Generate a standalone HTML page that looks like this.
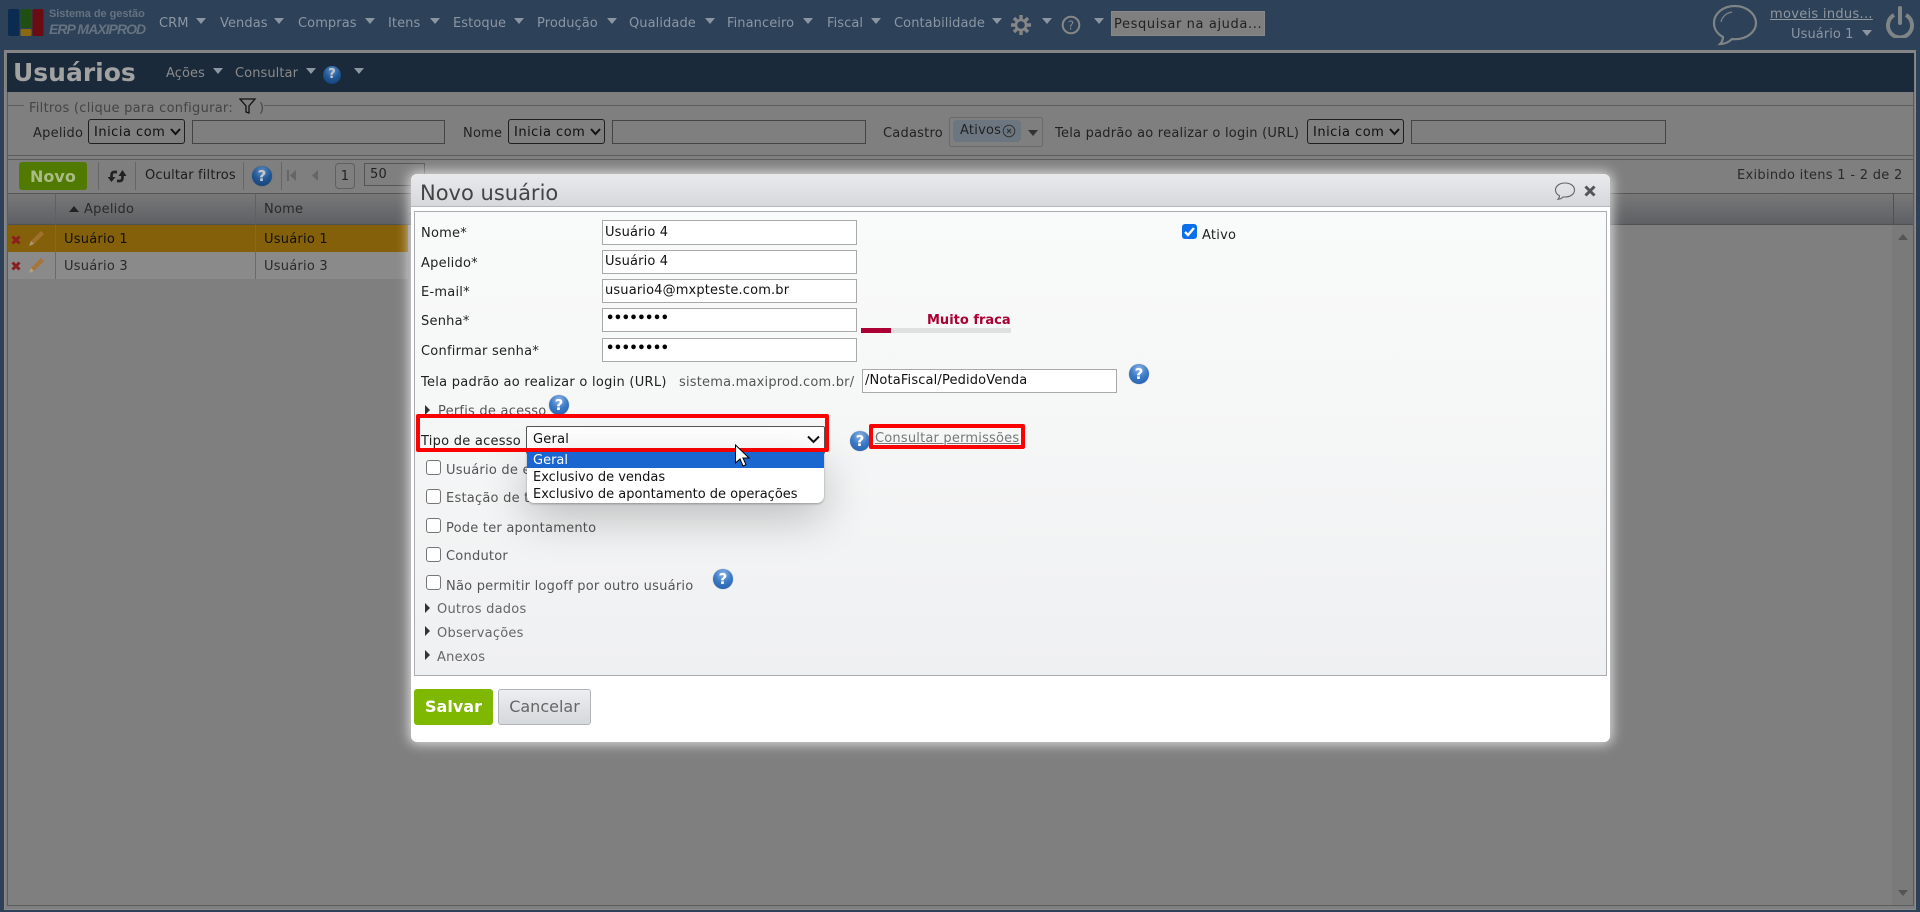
<!DOCTYPE html>
<html lang="pt-BR"><head><meta charset="utf-8"><title>Novo usuário</title>
<style>
*{box-sizing:border-box}
html,body{margin:0;padding:0;width:1920px;height:912px;overflow:hidden;background:#2d4159;font-family:"DejaVu Sans","Liberation Sans",sans-serif;font-size:13px;letter-spacing:.23px}
.t{position:absolute;white-space:nowrap;line-height:16px;height:16px}
.b{position:absolute}
.a{position:absolute;width:0;height:0;border-left:5px solid transparent;border-right:5px solid transparent;border-top:6px solid #8b96a3}
.m{color:#8b96a3;letter-spacing:.08px}
.h{position:absolute;width:20px;height:20px;border-radius:50%;background:radial-gradient(circle at 50% 25%,#8fb6e6 0,#3f7cc8 45%,#1f5aa8 100%);color:#fff;font:bold 15px/20px "DejaVu Sans",sans-serif;text-align:center;letter-spacing:0;box-shadow:0 0 1px rgba(0,0,0,.4)}
.h.d{background:radial-gradient(circle at 50% 25%,#5f8cc0 0,#1f5696 50%,#123c70 100%);color:#c8c8c8}
.sel{position:absolute;border:1px solid #1f1f1f;border-radius:3px;background:#7f7f7f;color:#111;height:25px;line-height:25px;padding-left:5px;white-space:nowrap;letter-spacing:.5px}
.inp{position:absolute;border:1px solid #444;background:#7f7f7f;height:24px}
.chev{position:absolute}
.fi{position:absolute;left:602px;width:255px;background:#fff;border:1.5px solid #a9a9a9;color:#111;line-height:23px;padding-left:2px;white-space:nowrap;letter-spacing:.15px}
.lb{color:#222}
.g{color:#555}
.cb{position:absolute;left:426px;width:15px;height:15px;border:1.5px solid #767676;border-radius:3px;background:#fff}
.tri{position:absolute;left:425px;width:0;height:0;border-top:5px solid transparent;border-bottom:5px solid transparent;border-left:5px solid #333}
.sep{position:absolute;top:162px;width:1px;height:28px;background:#666}
</style></head>
<body>
<!-- page background -->
<div class="b" style="left:4px;top:50px;width:1912px;height:860px;background:#7f7f7f;border:1px solid #8a8a8a"></div>
<div class="b" style="left:4px;top:50px;width:1912px;height:3px;background:#858585"></div>
<div class="b" style="left:7px;top:53px;width:1907px;height:39px;background:#1a2a3a"></div>
<div class="b" style="left:7px;top:905px;width:1907px;height:1px;background:#5c5c5c"></div>
<div class="b" style="left:1913px;top:92px;width:1px;height:814px;background:#5c5c5c"></div>
<div class="b" style="left:7px;top:92px;width:1px;height:814px;background:#5c5c5c"></div>

<!-- logo -->
<svg class="b" style="left:8px;top:9px" width="36" height="28"><rect width="11.5" height="27" rx="2" fill="#0b2c50"/><rect x="12.5" width="11" height="19" rx="2" fill="#1f4f12"/><rect x="12.5" y="20" width="11" height="7" rx="1.5" fill="#8a6812"/><rect x="24.5" width="11" height="27" rx="2" fill="#6a0c12"/></svg>
<div class="t" style="left:49px;top:6px;font:bold 11px/16px 'Liberation Sans',sans-serif;color:#66727f;letter-spacing:-.05px">Sistema de gestão</div>
<div class="t" style="left:49px;top:21px;font:italic bold 14px/16px 'Liberation Sans',sans-serif;color:#66727f;letter-spacing:-.95px">ERP MAXIPROD</div>

<!-- top menu -->
<div class="t m" style="left:159px;top:16px">CRM</div><i class="a" style="left:196px;top:18px"></i>
<div class="t m" style="left:220px;top:16px">Vendas</div><i class="a" style="left:274px;top:18px"></i>
<div class="t m" style="left:298px;top:16px">Compras</div><i class="a" style="left:365px;top:18px"></i>
<div class="t m" style="left:388px;top:16px">Itens</div><i class="a" style="left:430px;top:18px"></i>
<div class="t m" style="left:453px;top:16px">Estoque</div><i class="a" style="left:514px;top:18px"></i>
<div class="t m" style="left:537px;top:16px">Produção</div><i class="a" style="left:607px;top:18px"></i>
<div class="t m" style="left:629px;top:16px">Qualidade</div><i class="a" style="left:705px;top:18px"></i>
<div class="t m" style="left:727px;top:16px">Financeiro</div><i class="a" style="left:803px;top:18px"></i>
<div class="t m" style="left:827px;top:16px">Fiscal</div><i class="a" style="left:871px;top:18px"></i>
<div class="t m" style="left:894px;top:16px">Contabilidade</div><i class="a" style="left:992px;top:18px"></i>
<svg class="b" style="left:1011px;top:15px" width="20" height="20" viewBox="0 0 20 20"><g stroke="#868686" stroke-width="3.4"><path d="M10 0v20M0 10h20M3 3l14 14M17 3L3 17"/></g><circle cx="10" cy="10" r="6.300" fill="#868686"/><circle cx="10" cy="10" r="3.800" fill="#2d4159"/></svg>
<i class="a" style="left:1042px;top:18px"></i>
<svg class="b" style="left:1061px;top:15px" width="20" height="20"><circle cx="10" cy="10" r="8.300" fill="none" stroke="#868686" stroke-width="2"/><text x="10" y="14.500" text-anchor="middle" font-family="DejaVu Sans" font-size="12" fill="#868686">?</text></svg>
<i class="a" style="left:1094px;top:18px"></i>
<div class="b" style="left:1111px;top:11px;width:154px;height:25px;background:#7f7f7f;border:1px solid #888"></div>
<div class="t" style="left:1114px;top:17px;color:#222;letter-spacing:.62px">Pesquisar na ajuda...</div>

<!-- top right -->
<svg class="b" style="left:1712px;top:4px" width="46" height="42" viewBox="0 0 46 42" fill="none" stroke="#7f8487" stroke-width="2.200"><path d="M23 2C11 2 2 9.500 2 19c0 6 3.500 11 9 14 0 2.500-1 5-3 7 4.500 0 9-2 12-5 1 .1 2 .2 3 .2 12 0 21-7.500 21-16.200S35 2 23 2z"/><path d="M9 18c1-5 5-9 11-10" stroke-width="1.200"/></svg>
<div class="t" style="left:1770px;top:7px;color:#8f979f;text-decoration:underline;letter-spacing:.3px">moveis indus...</div>
<div class="t m" style="left:1791px;top:27px">Usuário 1</div><i class="a" style="left:1862px;top:30px"></i>
<svg class="b" style="left:1886px;top:6px" width="28" height="32" fill="none" stroke="#7f8487" stroke-width="4"><path d="M8 9A12 12 0 1 0 20 9"/><path d="M14 2v15" stroke-linecap="round"/></svg>

<!-- title -->
<div class="t" style="left:13px;top:58px;height:30px;font:bold 25px/30px 'DejaVu Sans',sans-serif;color:#a2a2a2;letter-spacing:0">Usuários</div>
<div class="t" style="left:166px;top:66px;color:#8a8a8a;letter-spacing:.08px">Ações</div><i class="a" style="left:213px;top:68px"></i>
<div class="t" style="left:235px;top:66px;color:#8a8a8a;letter-spacing:.08px">Consultar</div><i class="a" style="left:306px;top:68px"></i>
<div class="h d" style="left:323px;top:66px;width:18px;height:18px;line-height:18px;font-size:13px">?</div><i class="a" style="left:354px;top:68px"></i>

<!-- filters -->
<div class="b" style="left:7px;top:105px;width:1907px;height:51px;border:1px solid #5c5c5c"></div>
<div class="t" style="left:24px;top:100px;width:240px;height:14px;background:#7f7f7f"></div>
<div class="t" style="left:29px;top:101px;color:#444;letter-spacing:.27px">Filtros (clique para configurar:</div>
<svg class="b" style="left:239px;top:98px" width="18" height="16" fill="none" stroke="#111" stroke-width="1.300"><path d="M1 1h15L10 8v7l-3-1V8z"/></svg>
<div class="t" style="left:259px;top:101px;color:#444">)</div>

<div class="t lb" style="left:33px;top:126px">Apelido</div>
<div class="sel" style="left:88px;top:119px;width:97px">Inicia com</div>
<svg class="chev" style="left:170px;top:128px" width="11" height="8" fill="none" stroke="#111" stroke-width="2"><path d="M1 1l4.500 5L10 1"/></svg>
<div class="inp" style="left:192px;top:120px;width:253px"></div>
<div class="t lb" style="left:463px;top:126px">Nome</div>
<div class="sel" style="left:508px;top:119px;width:97px">Inicia com</div>
<svg class="chev" style="left:590px;top:128px" width="11" height="8" fill="none" stroke="#111" stroke-width="2"><path d="M1 1l4.500 5L10 1"/></svg>
<div class="inp" style="left:612px;top:120px;width:254px"></div>
<div class="t lb" style="left:883px;top:126px">Cadastro</div>
<div class="b" style="left:949px;top:117px;width:94px;height:30px;border:1px solid #6a6a6a;border-radius:3px"></div>
<div class="b" style="left:953px;top:120px;width:68px;height:22px;background:#6c7680;border-radius:4px"></div>
<div class="t" style="left:960px;top:123px;color:#222">Ativos</div>
<svg class="b" style="left:1002px;top:124px" width="14" height="14" fill="none" stroke="#333"><circle cx="7" cy="7" r="5.800"/><path d="M5 5l4 4M9 5l-4 4" stroke-width="1.200"/></svg>
<div class="b" style="left:1028px;top:130px;border-left:5px solid transparent;border-right:5px solid transparent;border-top:6px solid #333"></div>
<div class="t lb" style="left:1055px;top:126px">Tela padrão ao realizar o login (URL)</div>
<div class="sel" style="left:1307px;top:119px;width:97px">Inicia com</div>
<svg class="chev" style="left:1389px;top:128px" width="11" height="8" fill="none" stroke="#111" stroke-width="2"><path d="M1 1l4.500 5L10 1"/></svg>
<div class="inp" style="left:1411px;top:120px;width:255px"></div>

<!-- toolbar -->
<div class="b" style="left:7px;top:159px;width:1907px;height:34px;border:1px solid #5c5c5c;border-bottom:none"></div>
<div class="b" style="left:19px;top:162px;width:68px;height:28px;background:#517b00;border-radius:3px"></div>
<div class="t" style="left:30px;top:169px;font-weight:bold;font-size:16px;color:#a9bb86;width:50px;letter-spacing:0">Novo</div>
<div class="sep" style="left:98px"></div><div class="sep" style="left:135px"></div><div class="sep" style="left:243px"></div><div class="sep" style="left:281px"></div>
<svg class="b" style="left:108px;top:169px" width="19" height="15" fill="none" stroke="#222" stroke-width="2.700"><path d="M9 3H6C4 3 3.500 5 3.500 7v3"/><path d="M-.5 8l4 5 4-5z" fill="#222" stroke="none"/><path d="M9 12h3c2 0 2.500-2 2.500-4V5"/><path d="M10.500 7l4-6 4 6z" fill="#222" stroke="none"/></svg>
<div class="t" style="left:145px;top:168px;color:#1c1c1c;letter-spacing:.16px">Ocultar filtros</div>
<div class="h d" style="left:252px;top:166px">?</div>
<svg class="b" style="left:287px;top:169px" width="10" height="14" fill="#666"><rect x="0" y="1" width="2" height="11"/><path d="M3 6.500L9 1v11z"/></svg>
<svg class="b" style="left:311px;top:169px" width="8" height="14" fill="#666"><path d="M1 6.500L7 1v11z"/></svg>
<div class="b" style="left:335px;top:163px;width:20px;height:26px;border:1px solid #5f5f5f;border-radius:4px;text-align:center;line-height:26px;color:#222">1</div>
<div class="b" style="left:364px;top:163px;width:61px;height:23px;border:1px solid #555;line-height:22px;padding-left:5px;color:#222">50</div>
<div class="t" style="left:1737px;top:168px;color:#2a2a2a;letter-spacing:.3px">Exibindo itens 1 - 2 de 2</div>

<!-- grid -->
<div class="b" style="left:8px;top:193px;width:1905px;height:32px;background:linear-gradient(#787878,#5f6064);border-top:1px solid #555;border-bottom:1px solid #4e5054"></div>
<div class="b" style="left:55px;top:193px;width:1px;height:86px;background:#5f6064"></div>
<div class="b" style="left:255px;top:193px;width:1px;height:86px;background:#5f6064"></div>
<div class="b" style="left:1893px;top:193px;width:1px;height:32px;background:#4e5054"></div>
<div class="b" style="left:69px;top:206px;border-left:5px solid transparent;border-right:5px solid transparent;border-bottom:6px solid #222"></div>
<div class="t" style="left:84px;top:202px;color:#2a2a2a">Apelido</div>
<div class="t" style="left:264px;top:202px;color:#2a2a2a">Nome</div>
<div class="b" style="left:8px;top:225px;width:400px;height:27px;background:#85600a"></div>
<div class="b" style="left:8px;top:252px;width:400px;height:27px;background:#8a8a8a"></div>
<div class="b" style="left:55px;top:225px;width:1px;height:54px;background:#6a6a6a"></div>
<div class="b" style="left:255px;top:225px;width:1px;height:54px;background:#6a6a6a"></div>
<svg class="b" style="left:11px;top:235px" width="10" height="10" stroke="#8a1f1f" stroke-width="3"><path d="M1.500 1.500l7 7M8.500 1.500l-7 7"/></svg>
<svg class="b" style="left:27px;top:229px" width="19" height="19"><path d="M2 17l2-5L14 2l3 3L7 15z" fill="#a0702e"/><path d="M2 17l2-5 3 3z" fill="#a89a78"/></svg>
<svg class="b" style="left:11px;top:261px" width="10" height="10" stroke="#8a1f1f" stroke-width="3"><path d="M1.500 1.500l7 7M8.500 1.500l-7 7"/></svg>
<svg class="b" style="left:27px;top:256px" width="19" height="19"><path d="M2 17l2-5L14 2l3 3L7 15z" fill="#a8743a"/><path d="M2 17l2-5 3 3z" fill="#b0a488"/></svg>
<div class="t" style="left:64px;top:232px;color:#111">Usuário 1</div>
<div class="t" style="left:264px;top:232px;color:#111">Usuário 1</div>
<div class="t" style="left:64px;top:259px;color:#2a2a2a">Usuário 3</div>
<div class="t" style="left:264px;top:259px;color:#2a2a2a">Usuário 3</div>
<div class="b" style="left:1892px;top:225px;width:21px;height:680px;background:#7a7a7a"></div>
<div class="b" style="left:1898px;top:234px;border-left:5px solid transparent;border-right:5px solid transparent;border-bottom:6px solid #555"></div>
<div class="b" style="left:1898px;top:890px;border-left:5px solid transparent;border-right:5px solid transparent;border-top:6px solid #555"></div>

<!-- modal -->
<div class="b" style="left:411px;top:174px;width:1199px;height:568px;background:#fff;border-radius:6px;box-shadow:0 0 12px 2px rgba(255,255,255,.75)"></div>
<div class="b" style="left:411px;top:174px;width:1199px;height:33px;background:linear-gradient(#e9eaec,#d6d8dc);border-radius:6px 6px 0 0;border-bottom:1px solid #b4b8bc"></div>
<div class="t" style="left:420px;top:180px;height:26px;font-size:21px;line-height:26px;color:#444;letter-spacing:0">Novo usuário</div>
<svg class="b" style="left:1554px;top:181px" width="22" height="20" fill="none" stroke="#666" stroke-width="1.100"><path d="M11 2C5.500 2 1.500 5 1.500 9c0 2.500 1.500 4.500 4 5.800 0 1.200-.5 2.500-1.500 3.400 2 0 4-1 5.200-2.300.6.100 1.200.100 1.800.100 5.500 0 9.500-3 9.500-7S16.500 2 11 2z"/></svg>
<svg class="b" style="left:1584px;top:185px" width="12" height="12" stroke="#555" stroke-width="3"><path d="M1.500 1.500l9 9M10.500 1.500l-9 9"/></svg>

<div class="b" style="left:414px;top:211px;width:1193px;height:465px;background:linear-gradient(#f9fafa,#f6f7f7 40%,#eff0f2);border:1px solid #a9adb2"></div>

<div class="t lb" style="left:421px;top:226px">Nome*</div>
<div class="fi" style="top:220px;height:25px">Usuário 4</div>
<div class="t lb" style="left:421px;top:256px">Apelido*</div>
<div class="fi" style="top:250px;height:24px;line-height:22px">Usuário 4</div>
<div class="t lb" style="left:421px;top:285px">E-mail*</div>
<div class="fi" style="top:279px;height:24px;line-height:22px">usuario4@mxpteste.com.br</div>
<div class="t lb" style="left:421px;top:314px">Senha*</div>
<div class="fi" style="top:308px;height:24px;letter-spacing:-.5px;font-size:13px;line-height:20px;color:#000;font-weight:bold;padding-left:3px">••••••••</div>
<div class="t lb" style="left:421px;top:344px">Confirmar senha*</div>
<div class="fi" style="top:338px;height:24px;letter-spacing:-.5px;font-size:13px;line-height:19px;color:#000;font-weight:bold;padding-left:3px">••••••••</div>
<div class="t" style="left:927px;top:313px;font-weight:bold;color:#aa0033;letter-spacing:0">Muito fraca</div>
<div class="b" style="left:861px;top:328px;width:150px;height:5px;background:#e0e0e0"></div>
<div class="b" style="left:861px;top:328px;width:30px;height:5px;background:#aa0033"></div>
<div class="t lb" style="left:421px;top:375px;letter-spacing:.27px">Tela padrão ao realizar o login (URL)</div>
<div class="t g" style="left:679px;top:375px;letter-spacing:.2px">sistema.maxiprod.com.br/</div>
<div class="fi" style="left:862px;top:369px;height:24px;width:255px;line-height:22px">/NotaFiscal/PedidoVenda</div>
<div class="h" style="left:1129px;top:364px">?</div>
<div class="b" style="left:1182px;top:224px;width:15px;height:15px;background:#0a6fe8;border-radius:3px"></div>
<svg class="b" style="left:1182px;top:224px" width="15" height="15" fill="none" stroke="#fff" stroke-width="2.400"><path d="M3 8l3 3 6-7"/></svg>
<div class="t lb" style="left:1202px;top:228px">Ativo</div>

<i class="tri" style="top:405px"></i>
<div class="t g" style="left:438px;top:404px">Perfis de acesso</div>
<div class="h" style="left:549px;top:395px">?</div>

<div class="t lb" style="left:421px;top:434px;letter-spacing:.25px">Tipo de acesso</div>
<div class="b" style="left:526px;top:426px;width:299px;height:28px;background:#fff;border:1px solid #555;border-radius:2px;line-height:26px;padding-left:6px;color:#111">Geral</div>
<svg class="b" style="left:807px;top:435px" width="13" height="9" fill="none" stroke="#111" stroke-width="2"><path d="M1 1.500l5.500 5.500L12 1.500"/></svg>
<div class="b" style="left:416px;top:414px;width:413px;height:38px;border:4px solid #f00;border-radius:2px"></div>
<div class="h" style="left:850px;top:431px">?</div>
<div class="t" style="left:875px;top:431px;color:#777;text-decoration:underline;letter-spacing:.2px">Consultar permissões</div>
<div class="b" style="left:869px;top:424px;width:156px;height:25px;border:4px solid #f00;border-radius:2px"></div>

<div class="cb" style="top:460px"></div><div class="t g" style="left:446px;top:463px">Usuário de expedição</div>
<div class="cb" style="top:489px"></div><div class="t g" style="left:446px;top:491px">Estação de trabalho</div>
<div class="cb" style="top:518px"></div><div class="t g" style="left:446px;top:521px">Pode ter apontamento</div>
<div class="cb" style="top:547px"></div><div class="t g" style="left:446px;top:549px">Condutor</div>
<div class="cb" style="top:575px"></div><div class="t g" style="left:446px;top:579px">Não permitir logoff por outro usuário</div>
<div class="h" style="left:713px;top:569px">?</div>

<i class="tri" style="top:603px"></i><div class="t" style="left:437px;top:602px;color:#666">Outros dados</div>
<i class="tri" style="top:626px"></i><div class="t" style="left:437px;top:626px;color:#666">Observações</div>
<i class="tri" style="top:650px"></i><div class="t" style="left:437px;top:650px;color:#666">Anexos</div>

<div class="b" style="left:414px;top:689px;width:79px;height:36px;background:#7fb800;border-radius:3px;color:#fff;font:bold 16px/35px 'DejaVu Sans',sans-serif;text-align:center;letter-spacing:0">Salvar</div>
<div class="b" style="left:498px;top:689px;width:93px;height:36px;background:linear-gradient(#eceef0,#d5d8dc);border:1px solid #b0b4b8;border-radius:3px;color:#666;font:16px/34px 'DejaVu Sans',sans-serif;text-align:center;letter-spacing:0">Cancelar</div>

<!-- dropdown -->
<div class="b" style="left:527px;top:452px;width:297px;height:51px;background:#fff;border-radius:0 0 7px 7px;box-shadow:0 14px 45px rgba(0,0,0,.24),0 1px 2px rgba(0,0,0,.3);overflow:hidden;letter-spacing:0">
<div style="height:16px;background:#1a66d0;color:#fff;line-height:18px;padding-left:6px;white-space:nowrap">Geral</div>
<div style="height:17px;color:#111;line-height:19px;padding-left:6px;white-space:nowrap">Exclusivo de vendas</div>
<div style="height:17px;color:#111;line-height:19px;padding-left:6px;white-space:nowrap">Exclusivo de apontamento de operações</div>
</div>
<svg class="b" style="left:734px;top:444px" width="16" height="24"><path d="M1.500 1v18l4.500-4 3 7 3-1.300-3-6.700h6z" fill="#fff" stroke="#000" stroke-width="1"/></svg>
</body></html>
